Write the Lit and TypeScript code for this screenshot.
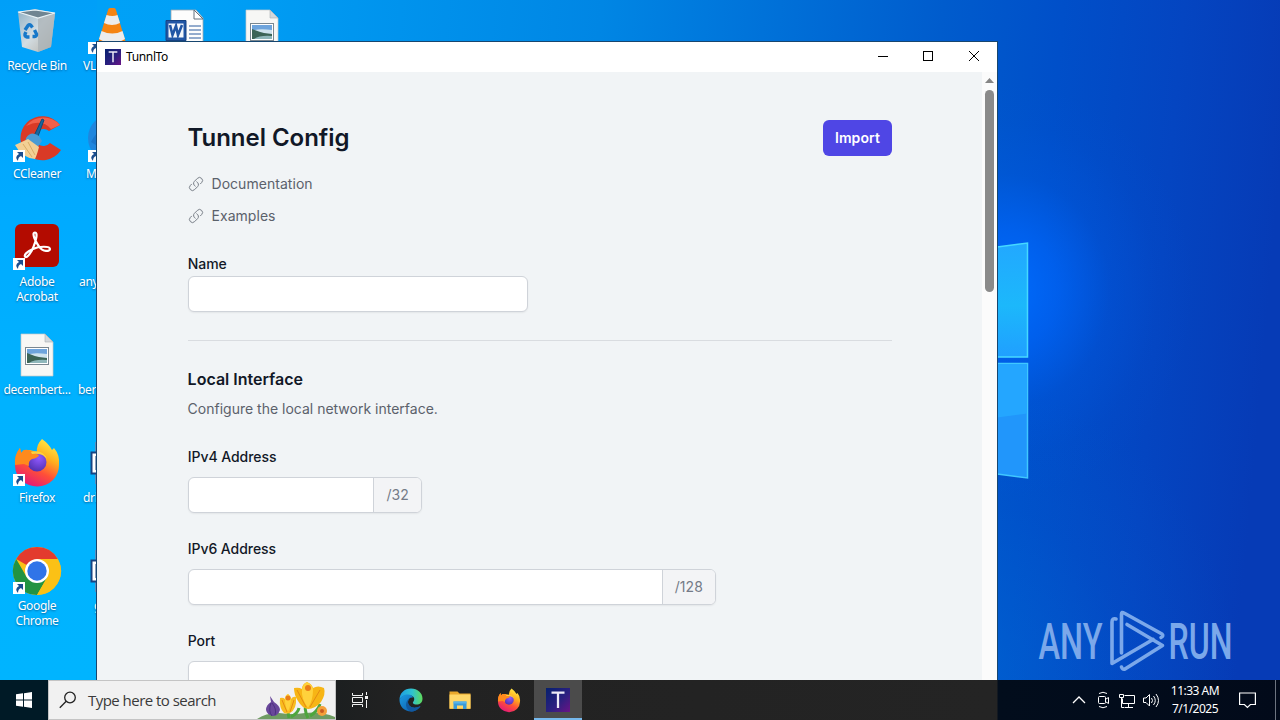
import { LitElement, html, svg, css, nothing } from 'lit';
import type { SVGTemplateResult, TemplateResult } from 'lit';
import { customElement, property } from 'lit/decorators.js';
import { styleMap } from 'lit/directives/style-map.js';

const recycle = svg`
  <defs>
    <linearGradient id="bin" x1="0" x2="1" y1="0" y2="1">
      <stop offset="0" stop-color="#8fb0c4" /><stop offset=".5" stop-color="#d3dde3" /><stop offset="1" stop-color="#b3aea4" />
    </linearGradient>
  </defs>
  <path d="M5 6 22 3l20 4-4 34-13 5-16-5Z" fill="url(#bin)" />
  <path d="M25 12 42 7l-4 34-13 5Z" fill="#a9b2b6" opacity=".75" />
  <path d="M5 6 22 4l20 3-17 5Z" fill="#708592" stroke="#e9f2f6" stroke-width="1.2" />
  <g fill="none" stroke="#1778c9" stroke-width="3.4">
    <path d="m12 24 3-4.500q1.500-1.500 3 0l1.500 2" /><path d="m21.500 24 2 4q.5 2-2 2.500h-2" /><path d="M16.500 31h-2.500q-2.500-.5-2-3l1-2" />
  </g>`;

const ccleaner = svg`
  <path d="M47 11A22 22 0 1 0 48 36L37 29a8.500 8.500 0 1 1-1-12Z" fill="#d93a26" />
  <path d="M47 11A22 22 0 0 0 13 12q16-8 25 3Z" fill="#f0604a" />
  <path d="m29 5 2 1-7 19-4-1Z" fill="#17679f" stroke="#0e4a77" />
  <path d="M13 24q5-8 13-2l3 5-5 7-12-5Z" fill="#4a9bd4" />
  <path d="M2 31q11-5 13-6l11 8q-2 8-4 12Q9 44 2 31Z" fill="#f3cf94" />
  <path d="m10 30 9 13M15 28l7 13" stroke="#d9ab66" />`;

const acrobat = svg`
  <rect x="2" y="2" width="44" height="43" rx="6" fill="#b30b00" />
  <path d="M22 10.500c-4 0 1 10 4 14 4 6 11 5 11 2.500 0-3-11-3-17 0-6 2.500-9 6-8 7.500 2 2.500 7-5 9-11 2-5 4-13 1-13Z" fill="none" stroke="#fff" stroke-width="2.200" />`;

const picture = svg`
  <path d="M8 4h24l8 8v34H8Z" fill="#f7f7f5" stroke="#c4c8ca" stroke-width=".7" />
  <path d="M32 4v8h8Z" fill="#d3d8dc" stroke="#aab0b4" stroke-width=".6" />
  <rect x="12.500" y="17.500" width="23" height="17" fill="#fff" stroke="#7a8790" />
  <rect x="14" y="19" width="20" height="14" fill="#6ea4dc" />
  <path d="M14 25q6-3 20-1v5H14Z" fill="#cfe3ee" />
  <path d="M14 23q7 3 12 4l8 1v5H14Z" fill="#3c6456" />
  <path d="M16 33q6-4 18-3v3Z" fill="#8fb7ba" />`;

const word = svg`
  <path d="M8 4h25l7 8v34H8Z" fill="#fdfdfd" stroke="#9ea8b0" stroke-width=".8" />
  <path d="M31 4v9h9Z" fill="#fff" stroke="#65717c" />
  <path d="M26 20h12M26 24h12M26 28h12M26 32h12" stroke="#2a5a9e" />
  <path d="M3 14.500h20v20H3Z" fill="#2156a5" stroke="#174382" />
  <path d="M5.500 17.500h15v14h-15Z" fill="#f3f7fc" />
  <path d="m7 19 2.500 10 3.500-9 2 9 4-10" fill="none" stroke="#2156a5" stroke-width="2.600" />`;

const vlc = svg`
  <path d="M8 36h32l3 9H5Z" fill="#e87502" />
  <path d="M22 2h4q1.500 0 2 2l10 33q-14 8-28 0L20 4q.5-2 2-2Z" fill="#f58412" />
  <path d="m18.500 9-2.500 8q8 4 16 0l-2.500-8q-5 2-11 0ZM13.500 25l-2.500 8q13 8 26 0l-2.500-8q-10 5-21 0Z" fill="#ececec" />`;

const edge = svg`
  <defs>
    <linearGradient id="edgeTop" x1="0" x2="1"><stop offset="0" stop-color="#1c9de4" /><stop offset=".55" stop-color="#2fc2d0" /><stop offset="1" stop-color="#5fdc5b" /></linearGradient>
    <linearGradient id="edgeLow" x1="0" x2="1" y2="1"><stop offset="0" stop-color="#1b9be2" /><stop offset="1" stop-color="#0b53a4" /></linearGradient>
  </defs>
  <path d="M1 24C1 10 11 1 24 1s23 9 23 20c0 8-5 12-12 12-6 0-9-3-6-6 5-8-3-13-10-13C10 14 3 18 1 24Z" fill="url(#edgeTop)" />
  <path d="M1 24c2-7 9-11 17-11 6 0 10 3 10 6-6-1-10 3-10 9 0 10 12 15 25 8-5 8-12 11-19 11C11 47 1 37 1 24Z" fill="url(#edgeLow)" />
  <path d="M18 28c0 10 12 15 25 8-5 8-12 11-19 11-12-4-14-21-1-27-3 2-5 5-5 8Z" fill="#11589f" />`;

const firefox = svg`
  <defs>
    <linearGradient id="fox" x1=".8" x2=".3" y1="0" y2="1">
      <stop offset="0" stop-color="#fff04a" /><stop offset=".35" stop-color="#ffb01e" /><stop offset=".65" stop-color="#ff4f38" /><stop offset="1" stop-color="#e3167c" />
    </linearGradient>
    <radialGradient id="globe" cx=".6" cy=".3" r=".8"><stop offset="0" stop-color="#9059ff" /><stop offset="1" stop-color="#4b2ca8" /></radialGradient>
  </defs>
  <path d="M29 1q7 5 10 11l2-2q6 7 5 17a22 21 0 0 1-44 1q-1-10 5-18l1 5 3-3 6 0 7 2Q23 7 29 1Z" fill="url(#fox)" />
  <circle cx="24" cy="24" r="9.500" fill="url(#globe)" />
  <path d="M7 10l1 5 3-3q5-1 8 2l7 3q-1 3-7 4-4 2-3 7l-5-2-9 1q-1-10 5-17Z" fill="#ff8a1c" />
  <path d="M18 14q12-3 16 7l-2-2q-4-4-13-3Z" fill="#ffd13b" />`;

const chrome = svg`
  <g transform="translate(0 1)">
    <circle cx="24" cy="24" r="24" fill="#fbc116" />
    <path d="M24 24 3.200 12A24 24 0 0 1 44.800 12Z" fill="#e33b2e" />
    <path d="M3.200 12A24 24 0 0 0 24 48L34.400 30 24 24 13.600 30Z" fill="#229342" />
    <path d="M34.400 30 24 48A24 24 0 0 0 44.800 12H24Z" fill="#fbc116" />
    <circle cx="24" cy="24" r="12" fill="#fff" /><circle cx="24" cy="24" r="9.700" fill="#3074e8" />
  </g>`;

const textFile = svg`
  <path d="M7 4h30v42H7Z" fill="#5b8fc0" />
  <path d="M3.500 14.500h22v21h-22Z" fill="#fff" stroke="#174382" stroke-width="2" />
  <path d="M8.500 18v14" stroke="#174382" stroke-width="2" />`;

const blueDisc = svg`<circle cx="24" cy="24" r="24" fill="#1f86de" /><path d="M3 28q8-16 22-16v30Z" fill="#1a76cc" />`;

const folder = svg`
  <path d="M3 7h16l4 4h22v31H3Z" fill="#e9a82b" /><path d="M3 13h42v28H3Z" fill="#ffd768" />
  <path d="M11 27h26v15h-7v-7H18v7h-7Z" fill="#3a9bd9" /><path d="M11 27h26v4H11Z" fill="#58b4ea" />`;

const tLogo = svg`
  <defs><linearGradient id="tl" x1="0" x2="1" y2="1"><stop offset="0" stop-color="#06206d" /><stop offset=".55" stop-color="#2b2080" /><stop offset="1" stop-color="#6a1385" /></linearGradient></defs>
  <rect width="48" height="48" fill="url(#tl)" /><path d="M11 9h26M24 9v31" stroke="#eceaf6" stroke-width="4.500" />`;

interface Shortcut {
  label: string;
  icon: SVGTemplateResult | null;
  arrow?: boolean;
  // left inset of a label that runs under the window
  inset?: number;
}

const columns: Shortcut[][] = [
  [
    { label: 'Recycle Bin', icon: recycle },
    { label: 'CCleaner', icon: ccleaner, arrow: true },
    { label: 'Adobe Acrobat', icon: acrobat, arrow: true },
    { label: 'decembert...', icon: picture },
    { label: 'Firefox', icon: firefox, arrow: true },
    { label: 'Google Chrome', icon: chrome, arrow: true },
  ],
  [
    { label: 'VL', icon: vlc, arrow: true, inset: 8 },
    { label: 'M', icon: blueDisc, arrow: true, inset: 11 },
    { label: 'any', icon: null, inset: 4 },
    { label: 'ber', icon: null, inset: 3 },
    { label: 'drl', icon: textFile, inset: 8 },
    { label: 'g', icon: textFile, inset: 19 },
  ],
  [{ label: '', icon: word }],
  [{ label: '', icon: picture }],
];

@customElement('app-icon')
export class AppIcon extends LitElement {
  @property({ attribute: false }) art: SVGTemplateResult | null = null;

  static styles = css`
    :host {
      display: block;
    }
    svg {
      display: block;
      width: 100%;
      height: 100%;
      overflow: visible;
    }
  `;

  render() {
    return html`<svg viewBox="0 0 48 48">${this.art ?? nothing}</svg>`;
  }
}

@customElement('desktop-icons')
export class DesktopIcons extends LitElement {
  static styles = css`
    :host {
      display: flex;
      gap: 1px;
      font: 12px/15px 'Noto Sans', 'Open Sans', sans-serif;
      color: #fff;
    }
    .col {
      width: 74px;
      display: grid;
      grid-auto-rows: 108px;
    }
    .item {
      display: flex;
      flex-direction: column;
      align-items: center;
      padding-top: 6px;
    }
    .art {
      position: relative;
      width: 48px;
      height: 48px;
    }
    .arrow {
      position: absolute;
      left: 0;
      bottom: 0;
      width: 12px;
      height: 12px;
    }
    .label {
      width: 72px;
      margin-top: 4px;
      text-align: center;
      letter-spacing: -0.32px;
      text-shadow: 0 1px 2px rgba(0, 50, 100, 0.6);
    }
    .label.under {
      box-sizing: border-box;
      width: 74px;
      text-align: left;
    }
  `;

  private label(s: Shortcut) {
    return s.inset === undefined
      ? html`<div class="label">${s.label}</div>`
      : html`<div class="label under" style=${styleMap({ paddingLeft: `${s.inset}px` })}>${s.label}</div>`;
  }

  render() {
    return columns.map(
      (col) => html`<div class="col">
        ${col.map(
          (s) => html`<div class="item">
            <div class="art">
              <app-icon .art=${s.icon}></app-icon>
              ${s.arrow
                ? html`<svg class="arrow" viewBox="0 0 12 12">
                    <rect width="12" height="12" fill="#fff" />
                    <path d="M4 2h6v6L8 6Q5 7 5 11 1 7 6 4Z" fill="#1c4e8f" />
                  </svg>`
                : nothing}
            </div>
            ${this.label(s)}
          </div>`,
        )}
      </div>`,
    );
  }
}

@customElement('tunnel-window')
export class TunnelWindow extends LitElement {
  static styles = css`
    :host {
      display: flex;
      flex-direction: column;
      box-sizing: border-box;
      overflow: hidden;
      border: 1px solid #17466f;
      border-bottom: 0;
      background: #f1f4f6;
      font: 14px/20px Inter, sans-serif;
      color: #111827;
    }
    .titlebar {
      display: flex;
      align-items: center;
      flex: none;
      height: 30px;
      padding-left: 8px;
      background: #fff;
      font: 12px/16px 'Noto Sans', 'Open Sans', sans-serif;
      color: #000;
    }
    .titlebar app-icon {
      width: 16px;
      height: 16px;
      margin-right: 5px;
    }
    .caption {
      flex: 1;
      letter-spacing: -0.36px;
    }
    .controls {
      width: 138px;
      height: 30px;
    }
    .body {
      display: flex;
      flex: 1;
      min-height: 0;
    }
    .page {
      box-sizing: border-box;
      width: 885px;
      padding: 48px 90px 0 91px;
      overflow: hidden;
    }
    .scroll {
      width: 15px;
      background: #fbfbfb;
      display: flex;
      flex-direction: column;
      align-items: center;
    }
    .up {
      width: 9px;
      height: 5px;
      margin: 6px 0 7px;
      background: #858585;
      clip-path: polygon(50% 0, 100% 100%, 0 100%);
    }
    .thumb {
      width: 9px;
      height: 202px;
      border-radius: 5px;
      background: #8a8a8a;
    }
    header {
      display: flex;
      justify-content: space-between;
    }
    h1 {
      margin: 0 0 0 -0.5px;
      font-size: 24px;
      line-height: 36px;
      font-weight: 600;
      letter-spacing: -0.03px;
    }
    button {
      width: 69px;
      height: 36px;
      padding: 0;
      border: 0;
      border-radius: 6px;
      background: #4f46e5;
      color: #fff;
      font: 600 14px/20px Inter, sans-serif;
      letter-spacing: 0.1px;
    }
    .link {
      display: flex;
      align-items: center;
      gap: 7.5px;
      margin-bottom: 12px;
      color: #5b616b;
      letter-spacing: 0.04px;
    }
    .link svg {
      width: 16px;
      height: 16px;
    }
    .links {
      padding-top: 18px;
    }
    label {
      display: block;
      font-weight: 500;
      letter-spacing: -0.05px;
      margin-left: -0.3px;
    }
    .name {
      margin-top: 28px;
    }
    .name .field {
      margin-top: 2px;
    }
    .field {
      display: flex;
      box-sizing: border-box;
      height: 36px;
      margin-top: 10px;
      border: 1px solid #cfd3d9;
      border-radius: 6px;
      background: #fff;
      box-shadow: 0 1px 2px rgba(0, 0, 0, 0.06);
      overflow: hidden;
    }
    .w340 {
      width: 340px;
    }
    .w234 {
      width: 234px;
    }
    .w528 {
      width: 528px;
    }
    .w176 {
      width: 176px;
    }
    input {
      flex: 1;
      min-width: 0;
      border: 0;
      padding: 0 12px;
      background: none;
      font: inherit;
    }
    .suffix {
      padding: 7px 12px;
      border-left: 1px solid #cfd3d9;
      background: #f3f4f6;
      color: #747b87;
      letter-spacing: 0.1px;
    }
    hr {
      margin: 28px 0 26px;
      border: 0;
      border-top: 1px solid #d9dce0;
    }
    h2 {
      margin: 0 0 0 -0.4px;
      font-size: 16px;
      line-height: 24px;
      font-weight: 600;
    }
    p {
      margin: 8px 0 28px -0.4px;
      color: #5b616b;
    }
    .group {
      margin-bottom: 26px;
    }
  `;

  private link(text: string) {
    return html`<div class="link">
      <svg viewBox="0 0 24 24" fill="none" stroke="#777d86" stroke-width="1.500" stroke-linecap="round">
        <path
          d="M13.190 8.688a4.500 4.500 0 0 1 1.242 7.244l-4.500 4.500a4.500 4.500 0 0 1-6.364-6.364l1.757-1.757m13.350-.622 1.757-1.757a4.500 4.500 0 0 0-6.364-6.364l-4.500 4.500a4.500 4.500 0 0 0 1.242 7.244"
        />
      </svg>
      <span>${text}</span>
    </div>`;
  }

  private group(label: string, width: string, suffix?: string) {
    return html`<div class="group">
      <label>${label}</label>
      <div class="field ${width}">
        <input type="text" />
        ${suffix ? html`<span class="suffix">${suffix}</span>` : nothing}
      </div>
    </div>`;
  }

  render() {
    return html`
      <div class="titlebar">
        <app-icon .art=${tLogo}></app-icon>
        <span class="caption">TunnlTo</span>
        <svg class="controls" viewBox="0 0 138 30" fill="none" stroke="#000">
          <path d="M19 14.500h10" />
          <rect x="64.500" y="9.500" width="9" height="9" />
          <path d="m110 9 10 10m0-10-10 10" />
        </svg>
      </div>
      <div class="body">
        <div class="page">
          <header>
            <h1>Tunnel Config</h1>
            <button>Import</button>
          </header>
          <div class="links">${this.link('Documentation')}${this.link('Examples')}</div>
          <div class="name">
            <label>Name</label>
            <div class="field w340"><input type="text" /></div>
          </div>
          <hr />
          <h2>Local Interface</h2>
          <p>Configure the local network interface.</p>
          ${this.group('IPv4 Address', 'w234', '/32')} ${this.group('IPv6 Address', 'w528', '/128')}
          ${this.group('Port', 'w176')}
        </div>
        <div class="scroll">
          <div class="up"></div>
          <div class="thumb"></div>
        </div>
      </div>
    `;
  }
}

@customElement('task-bar')
export class TaskBar extends LitElement {
  static styles = css`
    :host {
      display: flex;
      background: linear-gradient(90deg, #1c1f20 336px, #222 400px, #242424 997px, #020d1c 998px, #020a1a);
      color: #fff;
      font-family: 'Noto Sans', 'Open Sans', sans-serif;
    }
    svg {
      display: block;
    }
    .start {
      display: grid;
      place-items: center;
      width: 48px;
      background: #001a26;
    }
    .search {
      box-sizing: border-box;
      display: flex;
      align-items: center;
      width: 288px;
      border: 1px solid #c4c4c4;
      background: #f1f1f1;
      color: #3a3a3a;
      font: 15px/20px 'Open Sans', 'Noto Sans', sans-serif;
    }
    .glass {
      margin: 0 11px 0 10px;
    }
    .search span {
      flex: 1;
      white-space: nowrap;
      letter-spacing: -0.53px;
    }
    .apps {
      display: flex;
      gap: 1px;
    }
    .app {
      box-sizing: border-box;
      display: grid;
      place-items: center;
      width: 48px;
      height: 40px;
    }
    .app app-icon {
      width: 24px;
      height: 24px;
    }
    .view {
      margin-right: 2px;
    }
    .active {
      background: #4b4b4b;
      border-bottom: 2px solid #76b9ed;
      padding-top: 2px;
    }
    .tray {
      display: flex;
      align-items: center;
      margin-left: auto;
    }
    .clock {
      width: 66px;
      text-align: center;
      font-size: 12px;
      line-height: 18px;
      letter-spacing: -0.5px;
      white-space: nowrap;
    }
    .notes {
      margin: 0 19px 0 11px;
    }
    .peek {
      width: 4px;
      height: 40px;
      border-left: 1px solid #6d7480;
    }
  `;

  private app(art: SVGTemplateResult, active = false): TemplateResult {
    return html`<div class="app ${active ? 'active' : ''}"><app-icon .art=${art}></app-icon></div>`;
  }

  render() {
    return html`
      <div class="start">
        <svg width="16" height="16" viewBox="0 0 16 16" fill="#fff">
          <path d="M0 2.300 7 1.300V7.500H0ZM8 1.200 16 0V7.500H8ZM0 8.500H7V14.700L0 13.700ZM8 8.500H16V16L8 14.800Z" />
        </svg>
      </div>
      <div class="search">
        <svg class="glass" width="18" height="18" viewBox="0 0 18 18" fill="none" stroke="#222" stroke-width="1.300">
          <circle cx="11" cy="6.500" r="5.300" />
          <path d="M7.200 10.300.8 16.800" />
        </svg>
        <span>Type here to search</span>
        <svg width="80" height="38" viewBox="0 0 80 38">
          <path d="M2 38q8-6 22-6 14 2 26 0 16-2 30 4v2Z" fill="#6f9c62" />
          <path d="M34 37q-1-6-2-10M53 37q-5-10-1-16M55 35q8-5 10-12M36 36q7-4 8-9" stroke="#4da63d" stroke-width="3" fill="none" />
          <path d="M11 29q0-5 5-8l-1-6 4 6q6 4 6 8-2 6-7 6-6-1-7-6Z" fill="#69479a" />
          <path d="M16 22q-3 8 1 13M17 22q5 6 3 12" stroke="#4c3180" fill="none" />
          <g transform="translate(-3 0)">
            <path d="M28 17q3-1 5 1 0-3 3-5 3 2 3 5 2-3 5-2 1 12-6 16-4 1-6 0-5-5-4-15Z" fill="#f8bd20" />
            <path d="M33 18q0-4 3-5 3 2 3 6-1 8-3 11-3-4-3-12Z" fill="#ffd23c" />
            <path d="M42 7q5-1 8 1 0-5 5-7 5 2 6 6 5-3 11 0 2 6-3 14-6 7-13 7-6-1-10-8-4-6-4-13Z" fill="#f7b515" />
            <path d="M50 8q1-5 5-7 6 3 6 8 0 10-5 18-7-9-6-19Z" fill="#ffd23c" />
            <path d="m45 9 9 17M68 9 58 26M30 19l5 12M42 19l-4 12" stroke="#e58b12" fill="none" />
            <circle cx="56" cy="7" r="3" fill="#ea7c17" /><circle cx="36" cy="17" r="2.500" fill="#ea7c17" />
          </g>
          <circle cx="67" cy="30" r="5" fill="#f5a03a" /><circle cx="67" cy="30" r="2" fill="#c95b20" />
        </svg>
      </div>
      <div class="apps">
        <div class="app view">
          <svg width="18" height="18" viewBox="0 0 18 18" fill="none" stroke="#f2f2f2">
            <path d="M1.500 2v2.500h10V2M1.500 16v-2.500h10V16M1.500 6.500h10v5h-10ZM15.500 1v3M15.500 9v8" />
            <path d="M14 5h3v3h-3Z" fill="#f2f2f2" stroke="none" />
          </svg>
        </div>
        ${this.app(edge)}${this.app(folder)}${this.app(firefox)}${this.app(tLogo, true)}
      </div>
      <div class="tray">
        <svg width="92" height="24" viewBox="1070 0 92 24" fill="none" stroke="#fff">
          <path d="m1073 15 6-6 6 6" stroke-width="1.300" />
          <rect x="1098.500" y="8.500" width="7" height="7" rx="1" />
          <path d="m1106 11 2.500-1.500v6L1106 14M1099 5.500q4-2.500 8 0M1099 18.500q4 2.500 8 0" />
          <path d="M1124.500 7.500h10v8h-12v-5M1128.500 16v3M1125 19.500h8M1119.500 6.500h4v3h-4ZM1121.500 10v9.500h3" />
          <path d="M1143.500 10v4.500h2.500l3.500 3.500V6.500L1146 10ZM1151.500 10q2 2.500 0 5M1153.500 8q3.500 4.500 0 9M1156 6q5 6.500 0 13" />
        </svg>
        <div class="clock">11:33 AM<br />7/1/2025</div>
        <svg class="notes" width="17" height="18" viewBox="0 0 17 18" fill="none" stroke="#fff" stroke-width="1.200">
          <path d="M.6 2h15.800v11.500h-5l-3 3-3-3H.6Z" />
        </svg>
        <div class="peek"></div>
      </div>
    `;
  }
}

@customElement('app-root')
export class AppRoot extends LitElement {
  static styles = css`
    :host {
      display: flex;
      flex-direction: column;
      position: relative;
      width: 1280px;
      height: 720px;
      overflow: hidden;
    }
    .desktop {
      flex: 1;
      min-height: 0;
      background:
        radial-gradient(ellipse 190px 210px at 1005px 290px, rgba(0, 108, 255, 0.95), rgba(0, 104, 255, 0.65) 28%, rgba(0, 98, 245, 0.22) 55%, rgba(0, 92, 235, 0.06) 80%, rgba(0, 90, 230, 0) 100%),
        radial-gradient(ellipse 280px 300px at 960px 680px, rgba(0, 110, 215, 0.5), rgba(0, 100, 210, 0.15) 60%, rgba(0, 100, 210, 0)),
        linear-gradient(95deg, #00a2f8 0, #00a0f6 200px, #0086e4 600px, #005ccd 940px, #004fc9 1060px, #0445c1 1180px, #063bb6 1290px);
    }
    .left {
      position: absolute;
      left: 0;
      top: 0;
      width: 97px;
      height: 680px;
      background: linear-gradient(#009ff8, #00aaff 200px, #00b2ff 400px, #00b4ff);
    }
    .scene {
      position: absolute;
      left: 997px;
      top: 0;
    }
    desktop-icons {
      position: absolute;
      left: 0;
      top: 0;
    }
    tunnel-window {
      position: absolute;
      left: 96px;
      top: 41px;
      width: 902px;
      height: 639px;
    }
    task-bar {
      height: 40px;
    }
  `;

  render() {
    return html`
      <div class="desktop">
        <div class="left"></div>
        <svg class="scene" width="283" height="680" viewBox="997 0 283 680">
          <defs>
            <linearGradient id="pane" x2="0" y2="1">
              <stop offset="0" stop-color="#22a8ff" /><stop offset=".55" stop-color="#1cb8fb" /><stop offset="1" stop-color="#209fff" />
            </linearGradient>
          </defs>
          <path d="M990 248 1027.500 243V357H990Z" fill="url(#pane)" stroke="#45d9ff" stroke-width="1.500" />
          <path d="M990 363.500h37.500V478L990 473Z" fill="#2196fb" stroke="#3fc8ff" stroke-width="1.500" />
          <path d="M997 417.500 1027 413.500V364H997Z" fill="#24a6ff" />
          <g fill="#7ba8ea" font-family="Roboto, sans-serif" font-size="50.500" font-weight="500">
            <text x="1038.500" y="659" textLength="64" lengthAdjust="spacingAndGlyphs">ANY</text>
            <text x="1168.500" y="659" textLength="64" lengthAdjust="spacingAndGlyphs">RUN</text>
          </g>
          <g fill="none" stroke="#7ba8ea" stroke-width="3.600" stroke-linejoin="round" stroke-linecap="round">
            <path d="M1116 619q-4-1-4 3V663.500L1153 639.500" />
            <path d="M1121.500 653V614q0-2.500 2.500-1l38 21q2 2-1 3.500" />
            <path d="M1121.500 667q1 3 3.500 2l37.500-23.500L1127 624.500" />
          </g>
        </svg>
        <desktop-icons></desktop-icons>
        <tunnel-window></tunnel-window>
      </div>
      <task-bar></task-bar>
    `;
  }
}

declare global {
  interface HTMLElementTagNameMap {
    'app-icon': AppIcon;
    'desktop-icons': DesktopIcons;
    'tunnel-window': TunnelWindow;
    'task-bar': TaskBar;
    'app-root': AppRoot;
  }
}
